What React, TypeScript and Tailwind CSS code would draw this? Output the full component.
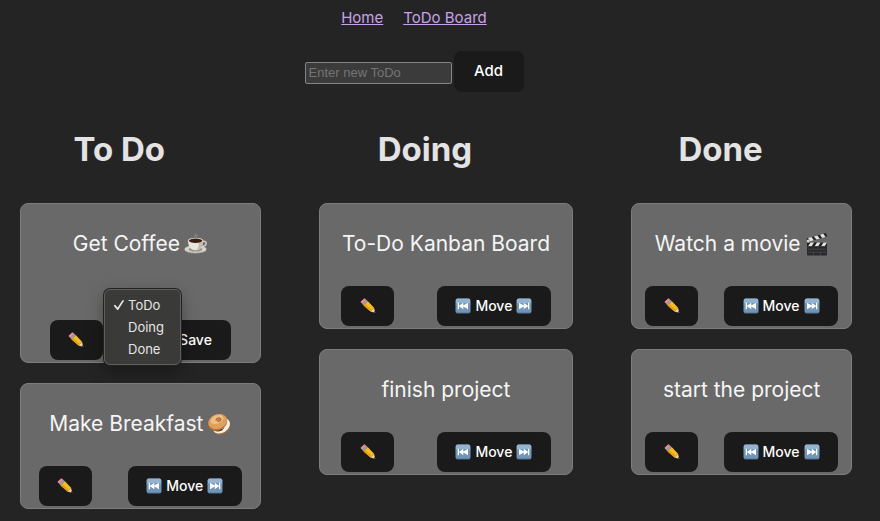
import { useState } from "react";

type Emoji = "coffee" | "bagel" | "clapper";
type Task = { title: string; emoji?: Emoji; editing?: boolean };
type Column = { name: string; tasks: Task[] };

const columns: Column[] = [
  {
    name: "To Do",
    tasks: [
      { title: "Get Coffee", emoji: "coffee", editing: true },
      { title: "Make Breakfast", emoji: "bagel" },
    ],
  },
  { name: "Doing", tasks: [{ title: "To-Do Kanban Board" }, { title: "finish project" }] },
  { name: "Done", tasks: [{ title: "Watch a movie", emoji: "clapper" }, { title: "start the project" }] },
];

function Coffee() {
  return (
    <svg viewBox="0 0 24 24" className="size-6 shrink-0" role="img" aria-label="coffee">
      <ellipse cx="11.5" cy="17.8" rx="11" ry="3.8" fill="#a5a096" />
      <ellipse cx="11.5" cy="17" rx="11" ry="3.7" fill="#d9d5cc" />
      <ellipse cx="11.5" cy="17.4" rx="7" ry="2.2" fill="#98938a" />
      <path d="M18.5 9.5c5-1.6 5.200 4.800-1.500 5.200" fill="none" stroke="#d2cec5" strokeWidth="1.500" />
      <path d="M4 8.500c0 5 2 9.700 7.500 9.700S19.300 13.500 19.300 8.500Z" fill="#e9e6df" />
      <path d="M15 10.500c0 4-1 6-2.500 7.600 4-.6 6.500-4 6.800-9Z" fill="#bfbab0" />
      <ellipse cx="11.600" cy="8.500" rx="7.700" ry="2.800" fill="#e0dcd4" />
      <ellipse cx="11.600" cy="8.800" rx="6.700" ry="2.200" fill="#3b1d12" />
      <path d="M11 5.500c-1-1.500 1.200-2 .3-4M13 5c-.5-1 .7-1.500.2-2.500" fill="none" stroke="#969696" strokeWidth=".8" />
    </svg>
  );
}

function Bagel() {
  return (
    <svg viewBox="0 0 24 24" className="size-6 shrink-0" role="img" aria-label="bagel">
      <ellipse cx="14.500" cy="15.300" rx="8.800" ry="6.700" fill="#b56c2c" transform="rotate(-28 14.500 15.300)" />
      <ellipse cx="14.200" cy="13.800" rx="9.300" ry="7" fill="#f7f3ea" transform="rotate(-32 14.200 13.800)" />
      <path d="M1.500 12c3 5.500 10 8 16.500 3l-3 3.500C9 21 2.500 18 1.500 12Z" fill="#4b3d2b" />
      <ellipse cx="10.600" cy="10.500" rx="9.900" ry="7.800" fill="#bd7433" transform="rotate(-22 10.600 10.500)" />
      <ellipse cx="10.700" cy="9.500" rx="9.500" ry="7.200" fill="#dfa05c" transform="rotate(-22 10.700 9.500)" />
      <ellipse cx="10" cy="7.500" rx="6.800" ry="4" fill="#efc086" transform="rotate(-22 10 7.500)" />
      <path d="M9 8.500c-.5-3 4.500-3.500 5-1.200.3 1.800-2.500 2.800-3.700 1.700" fill="#c98746" stroke="#9b5a25" strokeWidth=".9" />
    </svg>
  );
}

function Clapper() {
  return (
    <svg viewBox="0 0 24 24" className="size-6 shrink-0" role="img" aria-label="clapper board">
      <path d="M1.500 6.500 21 1l1.200 3.600L2.700 10Z" fill="#252525" />
      <path d="m3 6.100 3.500-1 2.300 3.200-3.500 1ZM9 4.400l3.400-1 2.300 3.300-3.400.9ZM15 2.700l3.300-.9 2.200 3.200-3.300 1Z" fill="#e4e4e4" />
      <path d="M2 10.500h20v4H2Z" fill="#202020" />
      <path d="M5.500 10.500H9l-2.500 4H3ZM12 10.500h3.500l-2.500 4H9.500ZM18.500 10.500H22l-2.500 4H16Z" fill="#e4e4e4" />
      <path d="M2 14.300h20v8.200a1 1 0 0 1-1 1H3a1 1 0 0 1-1-1Z" fill="#29292b" />
      <path d="M3 17.200h18M3 20.200h18M8.500 20.200v2.800M15.500 20.200v2.800" stroke="#59595b" strokeWidth=".6" />
      <circle cx="3.300" cy="9" r="1.600" fill="#d5d5d5" />
    </svg>
  );
}

function Pencil() {
  return (
    <svg viewBox="0 0 16 16" className="size-4" aria-hidden="true">
      <path d="M.8 3.600 3.500.9c.6-.5 1.400-.4 1.900.1l1 1-4 4L.9 4.600c-.4-.3-.4-.7-.1-1Z" fill="#f08a94" />
      <path d="m2.200 5.900 4-4.200 1.500 1.400-4 4.300Z" fill="#8aa3b8" />
      <path d="m3.600 7.400 4.100-4.300 6.300 6.600-3.500 3.700Z" fill="#fbbd18" />
      <path d="m3.600 7.400 1.500-1.500 6.800 6-1.400 1.500Z" fill="#ea9f0e" />
      <path d="m10.500 13.400 3.500-3.700 1.300 5.400Z" fill="#f2d3a0" />
      <path d="m13.500 14.500 1.300-1.400.6 2.100Z" fill="#333" />
    </svg>
  );
}

function Skip({ back = false }: { back?: boolean }) {
  return (
    <svg viewBox="0 0 16 16" className={back ? "size-4" : "size-4 -scale-x-100"} aria-hidden="true">
      <rect x=".5" y=".5" width="15" height="15" rx="2" fill="#557596" />
      <rect x=".8" y=".6" width="14.400" height="7.400" rx="1.800" fill="#93b3d0" />
      <rect x=".8" y="5" width="14.400" height="9.600" rx="1.500" fill="#7095b8" />
      <path d="M2.700 4.800H4v2.900l4.300-2.900v2.800l4.700-2.800v6.400l-4.700-2.800v2.800L4 8.300v2.900H2.700Z" fill="#fff" />
    </svg>
  );
}

const button = "flex h-10 items-center justify-center gap-1 rounded-lg bg-[#1a1a1a] text-sm font-medium text-white";

function StatusMenu() {
  const [status, setStatus] = useState("ToDo");
  const checkRow: Record<string, string> = { ToDo: "top-[10px]", Doing: "top-[32px]", Done: "top-[54px]" };
  const option =
    "h-[22px] min-h-0 bg-linear-to-r from-[#3a3a38] to-[#3a3a38] pt-[3px] pr-0 pb-0 pl-[19px] text-[13px] text-[#e6e6e5] [-webkit-text-fill-color:#e6e6e5]";
  return (
    <div className="absolute top-[3px] left-[83px] z-10 w-[77px] rounded-md border border-[#5e5e5c] bg-[#3a3a38] p-1 shadow-[0_0_0_1px_#222,0_6px_16px_rgba(0,0,0,0.35)]">
      <select
        aria-label="Status"
        size={3}
        value={status}
        onChange={(e) => setStatus(e.target.value)}
        className="block h-[66px] w-full appearance-none overflow-hidden border-0 bg-transparent p-0 outline-none"
      >
        <option className={option}>ToDo</option>
        <option className={option}>Doing</option>
        <option className={option}>Done</option>
      </select>
      <svg viewBox="0 0 10 10" className={`pointer-events-none absolute left-[9px] size-[10px] ${checkRow[status]}`} aria-hidden="true">
        <path d="m.9 5.700 2.800 3.400L9 .9" fill="none" stroke="#ececec" strokeWidth="1.700" strokeLinecap="round" strokeLinejoin="round" />
      </svg>
    </div>
  );
}

function Card({ task }: { task: Task }) {
  return (
    <li className="rounded-lg border border-[#7d7d7d] bg-[#696969] pt-6 pb-[2px]">
      <h2 className="flex h-8 items-center justify-center gap-1 text-[21px] leading-8 whitespace-nowrap text-[#f5f5f5]">
        {task.title}
        {task.emoji === "coffee" && <Coffee />}
        {task.emoji === "bagel" && <Bagel />}
        {task.emoji === "clapper" && <Clapper />}
      </h2>
      <div className={task.editing ? "relative mt-[26px] pt-[34px]" : "mt-[26px]"}>
        {task.editing && <StatusMenu />}
        <div className="flex justify-around">
          <button type="button" aria-label="Edit" className={`${button} w-[53px]`}>
            <Pencil />
          </button>
          {task.editing ? (
            <button type="button" className={`${button} w-[71px]`}>Save</button>
          ) : (
            <button type="button" className={`${button} w-[114px]`}>
              <Skip back />
              Move
              <Skip />
            </button>
          )}
        </div>
      </div>
    </li>
  );
}

export default function App() {
  return (
    <div className="min-h-screen bg-[#242424] pb-3 font-['Inter',sans-serif] text-[#e3e3e3]">
      <header className="pt-[6px] pr-[52px]">
        <nav className="flex justify-center gap-5 text-[15px] leading-6 text-[#c8a2ea]">
          <a href="#home" className="underline">Home</a>
          <a href="#board" className="underline">ToDo Board</a>
        </nav>
        <form className="mt-[21px] flex items-center justify-center gap-[2px]" onSubmit={(e) => e.preventDefault()}>
          <input
            aria-label="New ToDo"
            placeholder="Enter new ToDo"
            className="mt-[2px] h-[22px] w-[147px] rounded-xs border border-[#858585] bg-[#3b3b3b] px-[3px] font-['Liberation_Sans',Arial,sans-serif] text-[13px] placeholder:text-[#757575]"
          />
          <button type="submit" className="h-[41px] w-[70px] rounded-lg bg-[#1a1a1a] text-[15px] font-medium text-white">
            Add
          </button>
        </form>
      </header>
      <main className="mt-8 grid grid-cols-[241fr_255fr_221fr] gap-[58px] pr-7 pl-5">
        {columns.map((column) => (
          <section key={column.name}>
            <h1 className="pr-[42px] text-center text-[33px] leading-[50px] font-bold">{column.name}</h1>
            <ul className="mt-[29px] flex flex-col gap-5">
              {column.tasks.map((task) => (
                <Card key={task.title} task={task} />
              ))}
            </ul>
          </section>
        ))}
      </main>
    </div>
  );
}
